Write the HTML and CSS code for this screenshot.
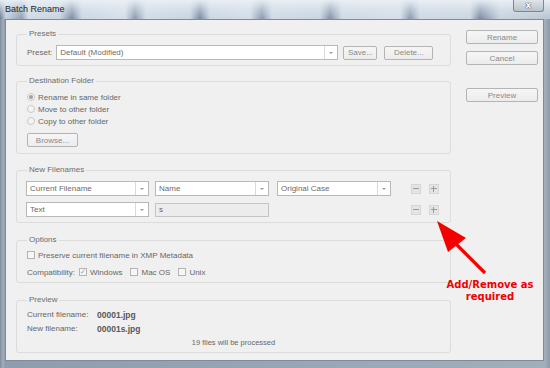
FILE: index.html
```html
<!DOCTYPE html>
<html lang="en">
<head>
  <meta charset="UTF-8">
  <title>Batch Rename</title>
  <link rel="stylesheet" href="styles.css">
</head>
<body>
  <div class="window">
    <div class="titlebar">
      <span class="title">Batch Rename</span>
      <span class="close">x</span>
    </div>

    <div class="client">
      <div class="main">
        <!-- Presets -->
        <fieldset class="group presets">
          <legend>Presets</legend>
          <div class="row">
            <span class="label">Preset:</span>
            <div class="select wide"><span>Default (Modified)</span><i class="arrow"></i></div>
            <button class="btn save">Save...</button>
            <button class="btn delete">Delete...</button>
          </div>
        </fieldset>

        <!-- Destination Folder -->
        <fieldset class="group destination">
          <legend>Destination Folder</legend>
          <div class="radio-line"><i class="radio on"></i>Rename in same folder</div>
          <div class="radio-line"><i class="radio"></i>Move to other folder</div>
          <div class="radio-line"><i class="radio"></i>Copy to other folder</div>
          <button class="btn browse">Browse...</button>
        </fieldset>

        <!-- New Filenames -->
        <fieldset class="group filenames">
          <legend>New Filenames</legend>
          <div class="name-row">
            <div class="select col1"><span>Current Filename</span><i class="arrow"></i></div>
            <div class="select col2"><span>Name</span><i class="arrow"></i></div>
            <div class="select col3"><span>Original Case</span><i class="arrow"></i></div>
            <span class="tool minus"></span>
            <span class="tool plus"></span>
          </div>
          <div class="name-row">
            <div class="select col1"><span>Text</span><i class="arrow"></i></div>
            <div class="field col2">s</div>
            <span class="spacer"></span>
            <span class="tool minus"></span>
            <span class="tool plus"></span>
          </div>
        </fieldset>

        <!-- Options -->
        <fieldset class="group options">
          <legend>Options</legend>
          <div class="check-line"><i class="box"></i>Preserve current filename in XMP Metadata</div>
          <div class="check-line compat">
            <span class="label">Compatibility:</span>
            <i class="box checked">&#10003;</i><span class="opt">Windows</span>
            <i class="box"></i><span class="opt">Mac OS</span>
            <i class="box"></i><span class="opt">Unix</span>
          </div>
        </fieldset>

        <!-- Preview -->
        <fieldset class="group preview">
          <legend>Preview</legend>
          <div class="info"><span class="key">Current filename:</span><b>00001.jpg</b></div>
          <div class="info"><span class="key">New filename:</span><b>00001s.jpg</b></div>
          <div class="count">19 files will be processed</div>
        </fieldset>
      </div>

      <div class="side">
        <button class="btn side-btn">Rename</button>
        <button class="btn side-btn">Cancel</button>
        <button class="btn side-btn preview-btn">Preview</button>
      </div>
    </div>

    <!-- annotation -->
    <svg class="note-arrow" width="550" height="368" viewBox="0 0 550 368">
      <line x1="485" y1="273" x2="452" y2="240" stroke="#f50000" stroke-width="3.2"/>
      <polygon points="437,221 466,238 448,252" fill="#f50000"/>
    </svg>
    <div class="note-text">Add/Remove as<br>required</div>
  </div>
</body>
</html>
```

FILE: styles.css
```css
/* base */
body {
  margin: 0;
  font-family: 'Liberation Sans', Arial, sans-serif;
  font-size: 8px;
  color: #676767;
}

.window {
  position: relative;
  width: 550px;
  height: 368px;
  background: linear-gradient(90deg, #7f8c9b, #a3aebb 3px, #8f9cab 5px, #a3aebb 545px, #8d99a7);
  overflow: hidden;
}

/* glass title bar */
.titlebar {
  height: 19px;
  display: flex;
  align-items: flex-start;
  justify-content: space-between;
  background:
    linear-gradient(180deg, rgba(235, 240, 246, 0.95) 0, rgba(225, 232, 240, 0.55) 9px, rgba(200, 212, 225, 0.1) 19px),
    linear-gradient(90deg, #5f7086 0, #c3cfdc 6px, #8799ae 22px, #d2dce6 28px, #c7d3df 60px, #70839a 72px, #cdd8e3 82px,
      #d8e1ea 125px, #8294aa 135px, #d3dde7 146px, #c8d4df 190px, #6d8199 200px, #ccd7e2 210px, #d5dee8 250px,
      #7f91a8 262px, #d1dbe5 272px, #cad5e0 320px, #7689a0 330px, #d0dae4 342px, #d7e0e9 400px, #8093aa 410px,
      #cfd9e3 420px, #cdd7e1 470px, #6f829a 480px, #c9d4df 500px, #b6c3d1 550px);
}

.title {
  margin: 4px 0 0 5px;
  font-size: 9px;
  color: #1e1e1e;
}

.close {
  width: 29px;
  height: 11px;
  margin-right: 6px;
  border: 1px solid #7d8896;
  border-top: none;
  border-radius: 0 0 3px 3px;
  background: linear-gradient(180deg, #dfe4ea, #b9c2cc);
  color: #fff;
  font-family: 'DejaVu Sans', sans-serif;
  font-size: 9px;
  font-weight: bold;
  line-height: 10px;
  text-align: center;
  text-shadow: 0 0 1px #333, 0 0 1px #333;
}

/* client area */
.client {
  margin-left: 5px;
  width: 539px;
  height: 342px;
  border: 1px solid #7f8b99;
  background: #f0f0f0;
  display: flex;
  padding: 9px 0 0 10px;
  box-sizing: border-box;
}

.main {
  width: 435px;
}

.side {
  display: flex;
  flex-direction: column;
  margin-left: 15px;
  padding-top: 1px;
}

/* group boxes */
.group {
  margin: 0 0 11px;
  padding: 0 10px;
  border: 1px solid #dcdcdc;
  border-radius: 3px;
  box-sizing: border-box;
}

.group legend {
  padding: 0 2px;
  margin-left: 0;
  line-height: 10px;
  color: #6c6c6c;
}

.presets { height: 37px; margin-bottom: 10px; }
.destination { height: 78px; }
.filenames { height: 58px; margin-bottom: 12px; }
.options { height: 48px; margin-bottom: 12px; }
.preview { height: 58px; }

.row {
  display: flex;
  align-items: center;
  margin-top: 6px;
}

.label {
  margin-right: 4px;
}

/* buttons */
.btn {
  height: 14px;
  padding: 0;
  border: 1px solid #b4b4b4;
  border-radius: 2px;
  background: linear-gradient(180deg, #f6f6f6, #ececec);
  font-family: inherit;
  font-size: 8px;
  color: #8a8a8a;
  box-sizing: border-box;
}

.save { width: 34px; margin-left: 5px; }
.delete { width: 49px; margin-left: 7px; }
.browse { width: 51px; margin-top: 6px; }

.side-btn {
  width: 72px;
  height: 14px;
  margin-bottom: 7px;
}

.preview-btn {
  margin-top: 16px;
}

/* dropdowns and fields */
.select {
  position: relative;
  display: flex;
  align-items: center;
  height: 15px;
  border: 1px solid #b8b8b8;
  background: #fff;
  box-sizing: border-box;
  padding-left: 3px;
  color: #6c6c6c;
}

.select .arrow {
  position: absolute;
  right: 0;
  top: 0;
  bottom: 0;
  width: 12px;
  border-left: 1px solid #dadada;
}

.select .arrow::after {
  content: "";
  position: absolute;
  left: 4px;
  top: 6px;
  border-left: 2px solid transparent;
  border-right: 2px solid transparent;
  border-top: 2px solid #9a9a9a;
}

.wide { width: 282px; }
.col1 { width: 123px; }
.col2 { width: 114px; margin-left: 6px; }
.col3 { width: 114px; margin-left: 8px; }

.field {
  height: 14px;
  border: 1px solid #c4c4c4;
  background: #ececec;
  box-sizing: border-box;
  padding-left: 3px;
  line-height: 12px;
}

.spacer {
  width: 122px;
}

.name-row {
  display: flex;
  align-items: center;
  margin-top: 6px;
  margin-left: -1px;
}

.name-row + .name-row {
  margin-top: 6px;
}

.tool {
  position: relative;
  width: 10px;
  height: 10px;
  margin-left: 20px;
  border: 1px solid #d6d6d6;
  background: #e4e4e4;
  box-sizing: border-box;
}

.tool + .tool { margin-left: 8px; }

.tool::before,
.plus::after {
  content: "";
  position: absolute;
  background: #9a9a9a;
}

.tool::before { left: 1px; right: 1px; top: 3px; height: 1px; }
.plus::after { top: 1px; bottom: 1px; left: 3px; width: 1px; }

/* radios and checkboxes */
.radio-line,
.check-line {
  display: flex;
  align-items: center;
  height: 12px;
}

.destination .radio-line:first-of-type { margin-top: 5px; }

.radio {
  width: 8px;
  height: 8px;
  margin-right: 3px;
  border: 1px solid #c9c9c9;
  border-radius: 50%;
  background: #f4f4f4;
  box-sizing: border-box;
  position: relative;
}

.radio.on::after {
  content: "";
  position: absolute;
  left: 1px;
  top: 1px;
  width: 4px;
  height: 4px;
  border-radius: 50%;
  background: #a0a0a0;
}

.check-line { margin-top: 4px; }
.compat { margin-top: 5px; }

.box {
  width: 8px;
  height: 8px;
  margin-right: 3px;
  border: 1px solid #b4b4b4;
  background: #f6f6f6;
  box-sizing: border-box;
  font-style: normal;
  font-size: 7px;
  line-height: 6px;
  color: #9a9a9a;
  text-align: center;
}

.opt { margin-right: 8px; }

/* preview info */
.info {
  display: flex;
  margin-top: 4px;
}

.info:first-of-type { margin-top: 5px; }

.key {
  width: 70px;
}

.info b {
  font-size: 8.5px;
  color: #585858;
}

.count {
  text-align: center;
  margin-top: 4px;
  font-size: 7.5px;
}

/* annotation overlay */
.note-arrow {
  position: absolute;
  left: 0;
  top: 0;
}

.note-text {
  position: absolute;
  left: 432px;
  top: 279px;
  width: 116px;
  text-align: center;
  font-family: 'DejaVu Sans', Verdana, sans-serif;
  font-size: 10px;
  font-weight: bold;
  line-height: 12px;
  color: #f00000;
}
```
